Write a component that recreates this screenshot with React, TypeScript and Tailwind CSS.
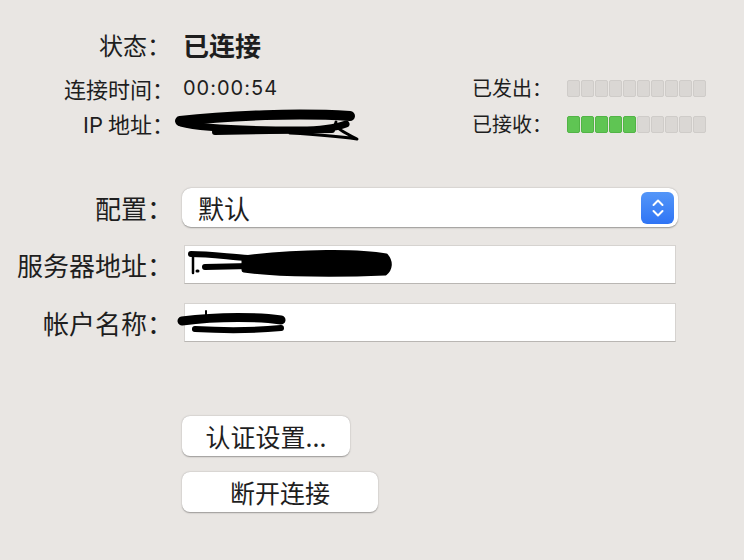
import React from "react"

const cjk = "font-['Noto_Sans_CJK_SC','Noto_Sans',sans-serif]"
const latin = "font-['Inter','Noto_Sans_CJK_SC',sans-serif]"

function Meter({ filled }: { filled: number }) {
  return (
    <div className="flex gap-px">
      {Array.from({ length: 10 }).map((_, i) => (
        <div
          key={i}
          className={
            i < filled
              ? "h-[17px] w-[13px] rounded-[2px] bg-[#5fc553] border border-[#52b446]"
              : "h-[17px] w-[13px] rounded-[2px] bg-[#dad7d4] border border-[#cfccc9]"
          }
        />
      ))}
    </div>
  )
}

// redaction marks drawn over the values, in page coordinates
function Scribbles() {
  return (
    <svg width="744" height="560" viewBox="0 0 744 560" className="pointer-events-none absolute left-0 top-0" fill="none" stroke="#000" strokeLinecap="round" strokeLinejoin="round">
      {/* IP */}
      <path d="M180 121 C230 115 300 113 350 116" strokeWidth="10" />
      <path d="M181 123 C200 128 240 130 300 130 C320 130 335 128 346 124" strokeWidth="7" />
      <path d="M215 132 L332 130" strokeWidth="6" />
      <path d="M290 133 C325 135 350 138 357 139 C345 133 333 127 336 122" strokeWidth="3" />
      {/* server */}
      <path d="M191 254 C210 254 230 257 248 258" strokeWidth="6" />
      <path d="M193 256 L193 273" strokeWidth="2.5" />
      <path d="M197 271 L198 271" strokeWidth="3" />
      <path d="M244 258 C300 251 360 251 386 256 C391 262 390 269 385 273 C340 275 280 275 244 270 Z" fill="#000" strokeWidth="5" />
      <path d="M205 267 L250 266" strokeWidth="6" />
      {/* account */}
      <path d="M182 321 C220 316 260 317 281 320" strokeWidth="9" />
      <path d="M195 329 C230 331 260 330 281 328" strokeWidth="6" />
      <path d="M206 316 L206 311" strokeWidth="2" />
    </svg>
  )
}

export default function App() {
  return (
    <div className={`relative w-[744px] h-[560px] bg-[#e9e6e3] text-[#1e1e1e] ${cjk}`}>
      <div className="pt-[23px]">
        {/* status rows */}
        <div className="flex h-[44px] items-center">
          <div className="w-[171px] text-right text-[24px] leading-none">状态：</div>
          <div className="ml-[12px] text-[26px] font-bold leading-none">已连接</div>
        </div>
        <div className="mt-[3px] flex h-[36px] items-center">
          <div className="w-[174px] text-right text-[22px] leading-none">连接时间：</div>
          <div className={`ml-[9px] text-[20px] tracking-[1px] leading-none ${latin}`}>00:00:54</div>
          <div className="ml-auto mr-[38px] flex items-center">
            <div className="w-[80px] text-[20px] leading-none">已发出：</div>
            <div className="ml-[15px]">
              <Meter filled={0} />
            </div>
          </div>
        </div>
        <div className="flex h-[36px] items-center">
          <div className="w-[174px] text-right text-[22px] leading-none">
            <span className={latin}>IP</span> 地址：
          </div>
          <div className="ml-auto mr-[38px] flex items-center">
            <div className="w-[80px] text-[20px] leading-none">已接收：</div>
            <div className="ml-[15px]">
              <Meter filled={5} />
            </div>
          </div>
        </div>

        {/* form */}
        <div className="mt-[46px] flex h-[39px] items-center">
          <div className="w-[173px] text-right text-[26px] leading-none">配置：</div>
          <div className="ml-[9px] flex h-[39px] w-[496px] items-center justify-between rounded-[9px] bg-white pl-[16px] pr-[4px] shadow-[0_0.5px_1.5px_rgba(0,0,0,0.35)]">
            <span className="text-[26px] leading-none">默认</span>
            <div className="flex h-[32px] w-[33px] items-center justify-center rounded-[6px] bg-gradient-to-b from-[#5496f8] to-[#2f74f5]">
              <svg width="14" height="22" viewBox="0 0 14 22" fill="none" stroke="#fff" strokeWidth="2" strokeLinecap="round" strokeLinejoin="round">
                <path d="M2.5 8 L7 3.5 L11.5 8" />
                <path d="M2.5 14 L7 18.5 L11.5 14" />
              </svg>
            </div>
          </div>
        </div>
        <div className="mt-[18px] flex h-[39px] items-center">
          <div className="w-[173px] text-right text-[26px] leading-none">服务器地址：</div>
          <div className="ml-[11px] h-[39px] w-[492px] border border-[#d6d3d0] border-b-[#b9b6b3] bg-white" />
        </div>
        <div className="mt-[19px] flex h-[39px] items-center">
          <div className="w-[173px] text-right text-[26px] leading-none">帐户名称：</div>
          <div className="ml-[11px] h-[39px] w-[492px] border border-[#d6d3d0] border-b-[#b9b6b3] bg-white" />
        </div>

        {/* buttons */}
        <div className="ml-[182px] mt-[74px] flex flex-col items-start gap-[16px]">
          <button className="flex h-[40px] w-[168px] items-center justify-center rounded-[8px] bg-white text-[25px] leading-none shadow-[0_0.5px_1.5px_rgba(0,0,0,0.35)]">
            认证设置...
          </button>
          <button className="flex h-[40px] w-[196px] items-center justify-center rounded-[8px] bg-white text-[25px] leading-none shadow-[0_0.5px_1.5px_rgba(0,0,0,0.35)]">
            断开连接
          </button>
        </div>
      </div>
      <Scribbles />
    </div>
  )
}
